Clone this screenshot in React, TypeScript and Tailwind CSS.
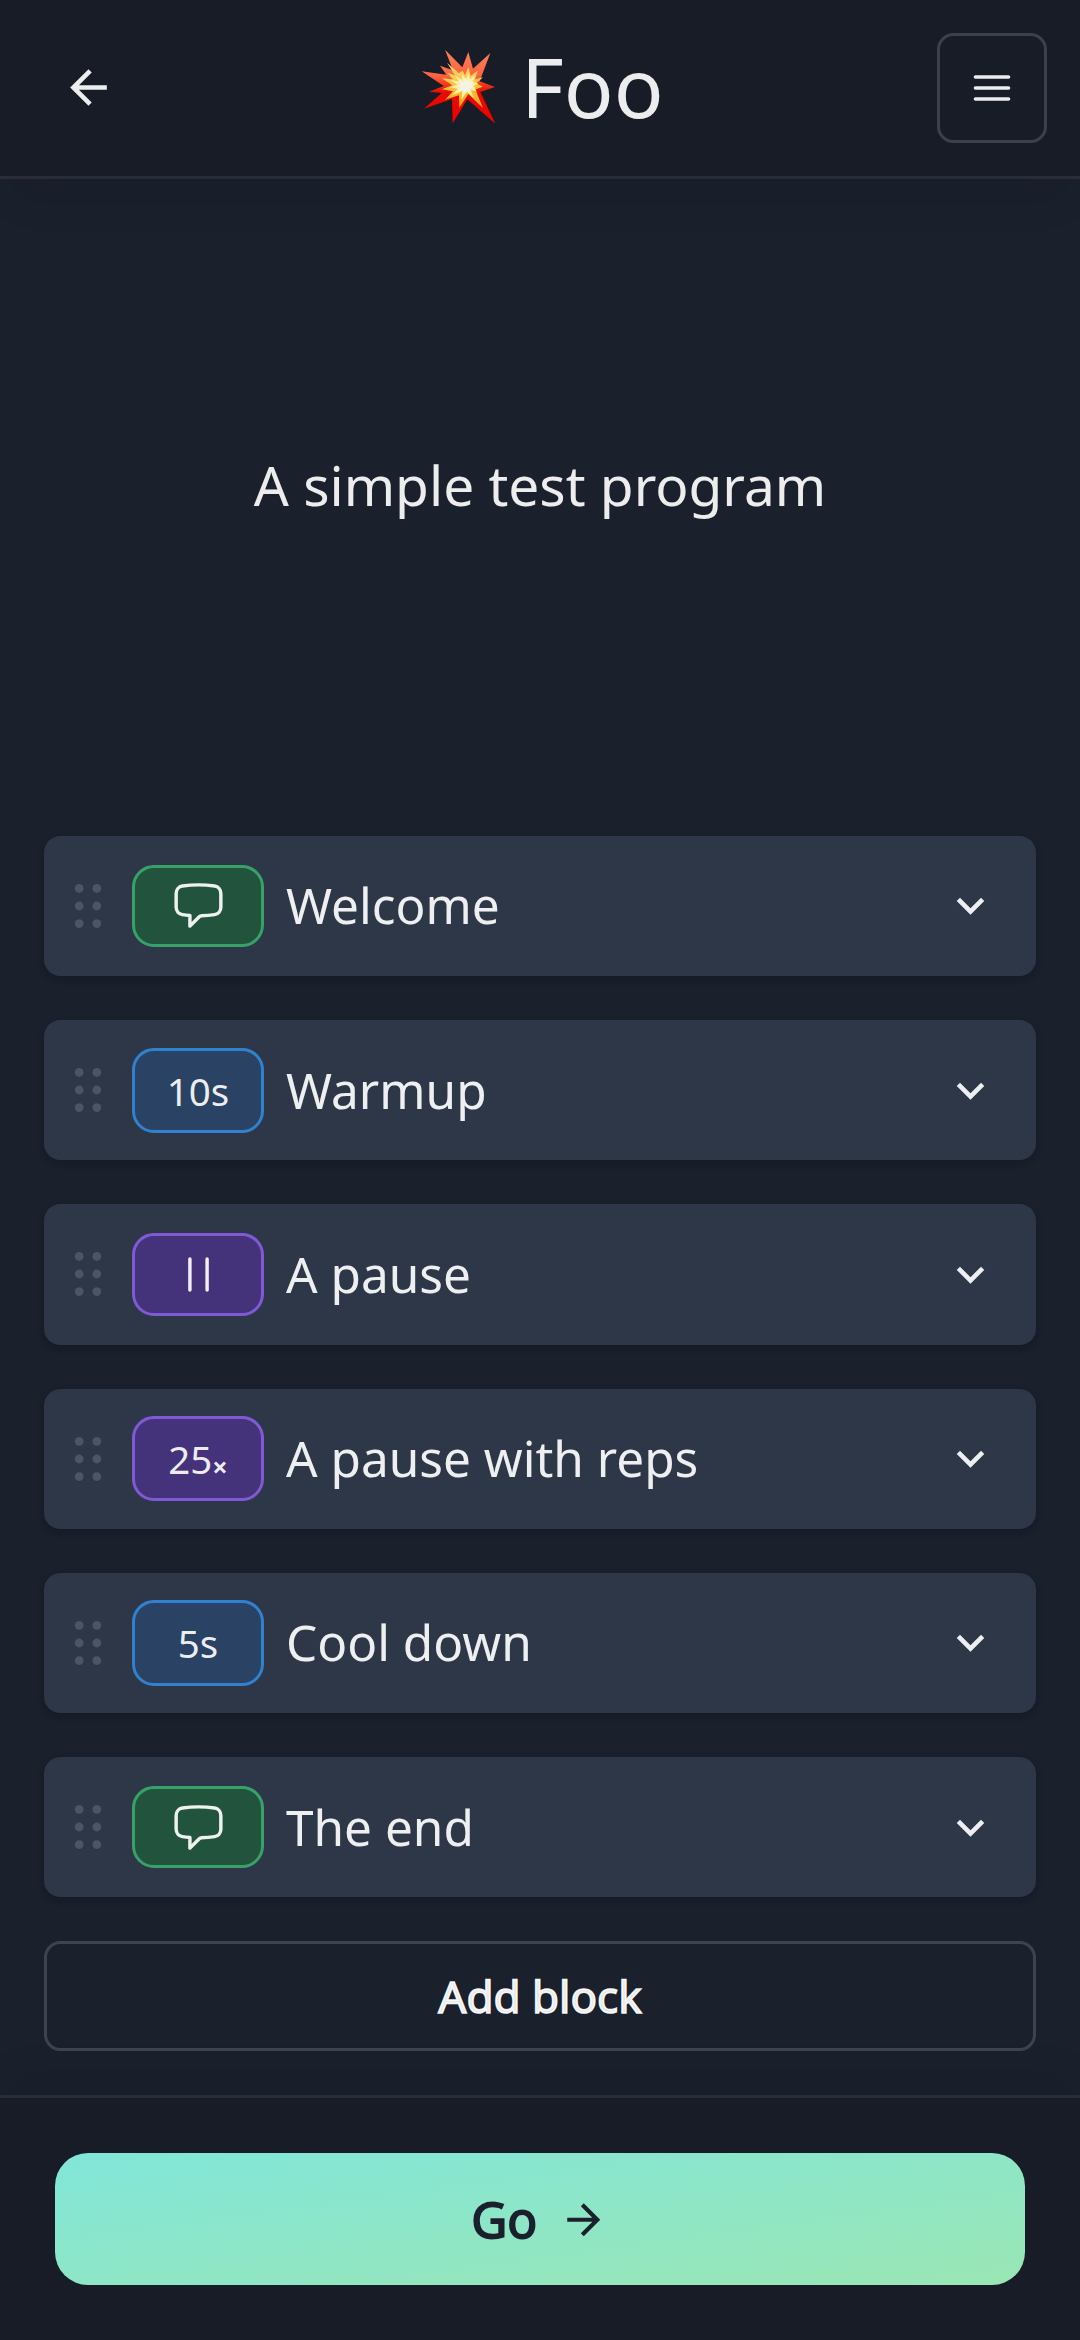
import React from "react";

type Kind = "message" | "timed" | "pause";

interface Block {
  name: string;
  kind: Kind;
  label?: string;
  reps?: string;
}

const blocks: Block[] = [
  { name: "Welcome", kind: "message" },
  { name: "Warmup", kind: "timed", label: "10s" },
  { name: "A pause", kind: "pause" },
  { name: "A pause with reps", kind: "pause", reps: "25" },
  { name: "Cool down", kind: "timed", label: "5s" },
  { name: "The end", kind: "message" },
];

const badgeColors: Record<Kind, string> = {
  message: "bg-[#22543d] border-[#38a169]",
  timed: "bg-[#2a4365] border-[#3182ce]",
  pause: "bg-[#44337a] border-[#805ad5]",
};

function Explosion() {
  return (
    <svg viewBox="49 45 249 249" className="mr-[21.5px] mb-[3px] size-[83px] shrink-0" role="img" aria-label="Explosion">
      <defs>
        <linearGradient id="flame" x1="0" y1="0" x2="0" y2="1">
          <stop offset="0" stopColor="#ff8058" />
          <stop offset="0.36" stopColor="#fb6440" />
          <stop offset="0.58" stopColor="#e80a00" />
          <stop offset="1" stopColor="#f00000" />
        </linearGradient>
        <linearGradient id="glow" x1="0" y1="0" x2="0" y2="1">
          <stop offset="0" stopColor="#f7d878" />
          <stop offset="0.5" stopColor="#fbc53c" />
          <stop offset="1" stopColor="#f7a416" />
        </linearGradient>
      </defs>
      <path
        fill="url(#flame)"
        d="M136 59 188 112 206 66 220 116 272 69 240 154 286 171 242 186 287 281 203 208 159 280 157 207 73 236 126 189 88 185 132 168 66 124 140 134 121 107 160 121Z"
      />
      <path
        fill="url(#glow)"
        d="M142 98 178 130 189 122 196 136 206 111 213 138 235 121 226 148 250 142 230 160 249 170 228 178 234 196 250 234 206 192 179 233 178 196 136 209 160 184 127 178 158 166 127 145 160 148 142 128 166 136Z"
      />
      <path
        fill="#fdeea8"
        d="M166 137 186 150 188 132 198 147 208 129 210 148 228 136 219 156 236 160 220 169 231 184 213 180 222 204 202 186 186 208 187 184 158 196 174 176 150 172 173 164 152 150 177 154Z"
      />
      <path
        fill="#f4f3e4"
        d="M178 150 191 156 194 142 201 154 210 144 210 157 223 155 214 166 226 173 212 175 214 188 201 181 190 193 190 179 172 184 184 172 168 168 184 164Z"
      />
    </svg>
  );
}

function ArrowBack() {
  return (
    <svg viewBox="0 0 24 24" className="size-[55px]" fill="currentColor">
      <path d="M20 11H7.83l5.59-5.59L12 4l-8 8 8 8 1.41-1.41L7.83 13H20v-2z" />
    </svg>
  );
}

function ArrowForward() {
  return (
    <svg viewBox="0 0 24 24" className="size-[49.5px]" fill="currentColor">
      <path d="m12 4-1.41 1.41L16.17 11H4v2h12.17l-5.58 5.59L12 20l8-8z" />
    </svg>
  );
}

function Hamburger() {
  return (
    <svg viewBox="0 0 24 24" className="size-[44px]" stroke="currentColor" strokeWidth="2" strokeLinecap="round">
      <path d="M3 6h18M3 12h18M3 18h18" />
    </svg>
  );
}

function ChevronDown() {
  return (
    <svg viewBox="0 0 24 24" className="size-[55px]" fill="currentColor">
      <path d="M16.59 8.59L12 13.17 7.41 8.59 6 10l6 6 6-6z" />
    </svg>
  );
}

function DragHandle() {
  return (
    <svg viewBox="0 0 10 10" className="size-[44px] text-[#4a5568]" fill="currentColor">
      {[1, 5, 9].map((y) => (
        <React.Fragment key={y}>
          <circle cx="3" cy={y} r="1" />
          <circle cx="7" cy={y} r="1" />
        </React.Fragment>
      ))}
    </svg>
  );
}

function ChatBubble() {
  return (
    <svg viewBox="0 0 24 24" className="size-[55px]" fill="none" stroke="currentColor" strokeWidth="1.5" strokeLinecap="round" strokeLinejoin="round">
      <path d="M2.25 12.76c0 1.6 1.123 2.994 2.707 3.227 1.087.16 2.185.283 3.293.369V21l4.076-4.076a1.526 1.526 0 0 1 1.037-.443 48.282 48.282 0 0 0 5.68-.494c1.584-.233 2.707-1.626 2.707-3.228V6.741c0-1.602-1.123-2.995-2.707-3.228A48.394 48.394 0 0 0 12 3c-2.392 0-4.744.175-7.043.513C3.373 3.746 2.25 5.14 2.25 6.741v6.018Z" />
    </svg>
  );
}

function Pause() {
  return (
    <svg viewBox="0 0 24 24" className="size-[55px]" fill="none" stroke="currentColor" strokeWidth="1.5" strokeLinecap="round">
      <path d="M15.75 5.25v13.5m-7.5-13.5v13.5" />
    </svg>
  );
}

function Badge({ block }: { block: Block }) {
  const text = block.label ?? block.reps;
  return (
    <div
      className={`flex w-[132px] shrink-0 items-center justify-center rounded-[22px] border-[3px] ${
        text ? "h-[85.25px]" : "h-[82.5px]"
      } ${badgeColors[block.kind]}`}
    >
      {block.label && <span className="pt-px text-[38.5px] leading-[58px]">{block.label}</span>}
      {block.reps && (
        <span className="text-[38.5px] leading-[58px]">
          {block.reps}
          <span className="relative top-[3px] text-[27px] leading-none font-bold">×</span>
        </span>
      )}
      {!text && (block.kind === "message" ? <ChatBubble /> : <Pause />)}
    </div>
  );
}

function BlockRow({ block }: { block: Block }) {
  return (
    <li className="flex h-[140.25px] items-center rounded-[16.5px] bg-[#2d3748] pr-[38px] pl-[22px] shadow-[0_3px_8px_0_rgba(0,0,0,0.1),0_3px_6px_0_rgba(0,0,0,0.06)]">
      <DragHandle />
      <div className="ml-[22px] flex">
        <Badge block={block} />
      </div>
      <span className="ml-[22px] flex-1 pb-px text-[49.5px] leading-[74px]">{block.name}</span>
      <ChevronDown />
    </li>
  );
}

export default function App() {
  return (
    <div className="flex h-[2340px] w-[1080px] flex-col overflow-hidden bg-[#1a202c] font-['Noto_Sans',sans-serif] text-white/92">
      <header className="relative flex h-[178.75px] shrink-0 items-center justify-between border-b-[3px] border-white/8 bg-[#181c26] px-[33px] shadow-[0_28px_41px_-8px_rgba(0,0,0,0.06)]">
        <button className="flex size-[110px] items-center justify-center">
          <ArrowBack />
        </button>
        <h1 className="flex items-center text-[82.5px] leading-[110px]">
          <Explosion />
          <span className="pb-[3px]">Foo</span>
        </h1>
        <button className="flex size-[110px] items-center justify-center rounded-[16.5px] border-[3px] border-white/16">
          <Hamburger />
        </button>
      </header>

      <main className="flex flex-1 flex-col px-[44px]">
        <section className="flex h-[613px] shrink-0 items-center justify-center">
          <p className="text-[55px] leading-[82.5px]">A simple test program</p>
        </section>
        <ul className="mt-[44px] flex flex-col gap-[44px]">
          {blocks.map((b) => (
            <BlockRow key={b.name} block={b} />
          ))}
        </ul>
        <button className="mt-[44px] flex h-[110px] shrink-0 items-center justify-center rounded-[16.5px] border-[3px] border-white/16 text-[44px] leading-[52.8px] [-webkit-text-stroke:1.6px_currentColor]">
          Add block
        </button>
      </main>

      <footer className="relative h-[244.75px] shrink-0 border-t-[3px] border-white/8 bg-[#181c26] p-[55px] shadow-[0_-28px_41px_-8px_rgba(0,0,0,0.06)]">
        <button className="flex h-[132px] w-full items-center justify-center gap-[22px] rounded-[33px] bg-[linear-gradient(to_bottom_right,#81e6d9,#9ae6b4)] text-[49.5px] leading-[60px] text-[#1a202c]">
          <span className="[-webkit-text-stroke:1.8px_currentColor]">Go</span>
          <ArrowForward />
        </button>
      </footer>
    </div>
  );
}
